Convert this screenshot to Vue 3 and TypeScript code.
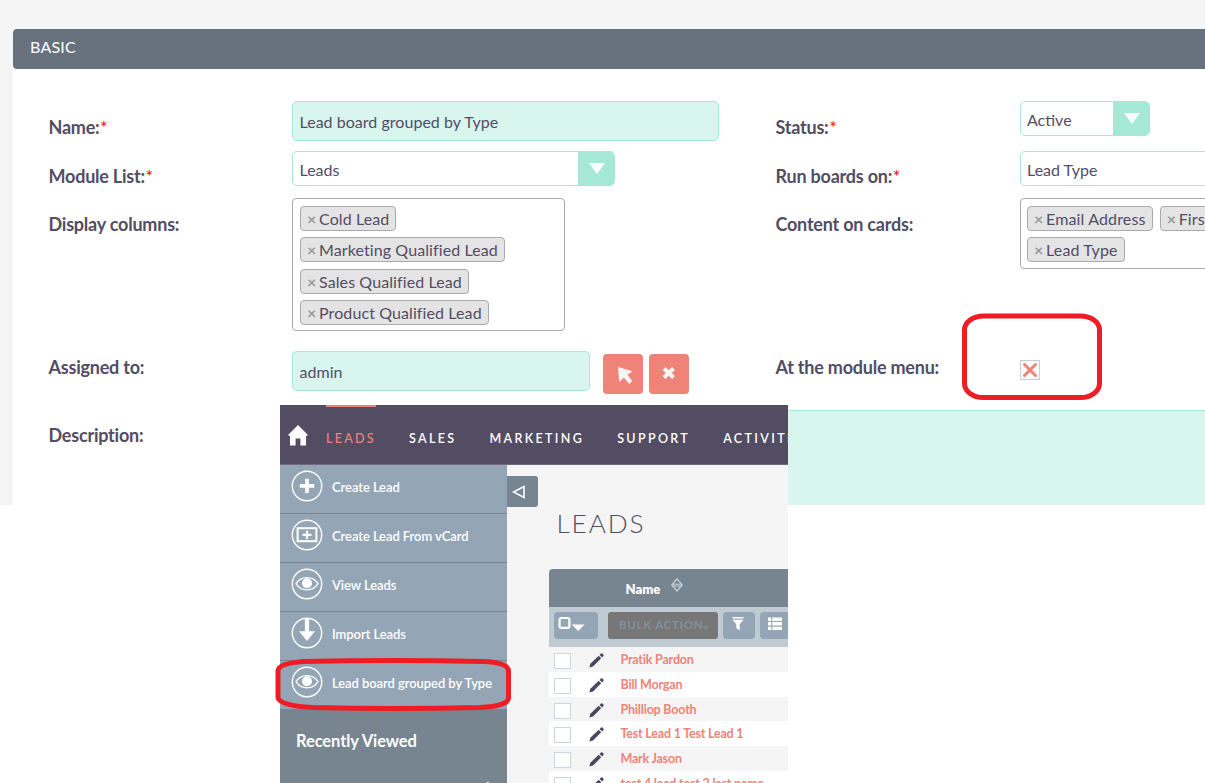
<script setup lang="ts">
interface MenuItem { label: string; icon: 'plus' | 'card' | 'eye' | 'import' }

const columns: string[] = ['Cold Lead', 'Marketing Qualified Lead', 'Sales Qualified Lead', 'Product Qualified Lead']
const cardFields: string[] = ['Email Address', 'First Name', 'Lead Type']
const tabs: string[] = ['LEADS', 'SALES', 'MARKETING', 'SUPPORT', 'ACTIVITIES']
const actions: MenuItem[] = [
  { label: 'Create Lead', icon: 'plus' },
  { label: 'Create Lead From vCard', icon: 'card' },
  { label: 'View Leads', icon: 'eye' },
  { label: 'Import Leads', icon: 'import' },
  { label: 'Lead board grouped by Type', icon: 'eye' },
]
const leads: string[] = ['Pratik Pardon', 'Bill Morgan', 'Philliop Booth', 'Test Lead 1 Test Lead 1', 'Mark Jason', 'test 4 lead test 2 last name']
</script>

<template>
  <div class="page">
    <main class="editor">
      <section class="panel">
        <header class="panel-head">BASIC</header>
        <div class="form">
          <label class="lab l1">Name:<b>*</b></label>
          <div class="input name">Lead board grouped by Type</div>
          <label class="lab l1">Status:<b>*</b></label>
          <div class="select status"><span>Active</span><i><svg width="16" height="11" viewBox="0 0 16 11"><path d="M0 0H16L8 11Z" fill="#fff" /></svg></i></div>

          <label class="lab l2">Module List:<b>*</b></label>
          <div class="select module"><span>Leads</span><i><svg width="16" height="11" viewBox="0 0 16 11"><path d="M0 0H16L8 11Z" fill="#fff" /></svg></i></div>
          <label class="lab l2">Run boards on:<b>*</b></label>
          <div class="select run"><span>Lead Type</span></div>

          <label class="lab l1">Display columns:</label>
          <div class="tags narrow"><span v-for="c in columns" :key="c" class="tag"><em>×</em>{{ c }}</span></div>
          <label class="lab l1">Content on cards:</label>
          <div class="tags wide"><span v-for="c in cardFields" :key="c" class="tag"><em>×</em>{{ c }}</span></div>

          <label class="lab l4">Assigned to:</label>
          <div class="assigned">
            <div class="input user">admin</div>
            <button class="btn pick"><svg width="40" height="40" viewBox="0 0 40 40"><path d="M15 13L29.5 17.3L24.5 20.8L29.3 27L26.2 30L21 23.8L16.2 28Z" fill="#f5f5f5" /></svg></button>
            <button class="btn"><svg width="40" height="40" viewBox="0 0 40 40"><path d="M15 14.5L24.5 23.5M24.5 14.5L15 23.5" stroke="#f5f5f5" stroke-width="4" /></svg></button>
          </div>
          <label class="lab l4">At the module menu:</label>
          <div class="check"><svg width="20" height="20" viewBox="0 0 20 20"><rect x=".5" y=".5" width="19" height="19" fill="#f8fafb" stroke="#c4ced6" /><path d="M4.5 4.5L15.5 15.5M15.5 4.5L4.5 15.5" stroke="#f08377" stroke-width="3" stroke-linecap="round" /></svg></div>

          <label class="lab l5">Description:</label>
          <div class="area"></div>
        </div>
      </section>
    </main>

    <section class="leads-window">
      <nav class="nav">
        <svg class="home" width="20" height="21" viewBox="0 0 20 21"><path d="M10 0L20 10L18 11.2V20.5H12.4V13.5H7.6V20.5H2V11.2L0 10Z" fill="#fff" /></svg>
        <a v-for="(t, i) in tabs" :key="t" :class="{ active: i === 0 }">{{ t }}</a>
      </nav>
      <div class="content">
        <aside class="side">
          <div v-for="a in actions" :key="a.label" class="action">
            <svg width="32" height="32" viewBox="0 0 32 32" fill="none" stroke="#fff">
              <circle cx="16" cy="16" r="14.7" stroke-width="1.4" />
              <path v-if="a.icon === 'plus'" d="M16 8.7V22.9M8.8 15.8H23.2" stroke-width="3.7" />
              <template v-else-if="a.icon === 'card'">
                <rect x="6.6" y="9.2" width="18.8" height="13" stroke-width="2" />
                <path d="M16 11.7V20.1M11.5 15.9H20.5" stroke-width="2.2" />
              </template>
              <template v-else-if="a.icon === 'eye'">
                <path d="M5 15.7C10 7.5 22 7.5 27 15.7C22 23.9 10 23.9 5 15.7Z" stroke-width="1.3" />
                <circle cx="16" cy="15.3" r="5" fill="#fff" stroke="none" />
              </template>
              <path v-else d="M13.9 1.5H18.1V14.2H24L16 24L8 14.2H13.9Z" fill="#fff" stroke="none" />
            </svg>
            <span>{{ a.label }}</span>
          </div>
          <div class="recent">
            <h3>Recently Viewed</h3>
            <svg width="10" height="12" viewBox="0 0 10 12"><path d="M1 4L5 .5L9 5.5L6 11Z" fill="#fff" /></svg>
          </div>
        </aside>
        <div class="toggle"><svg width="14" height="14" viewBox="0 0 14 14"><path d="M1.5 7L12 1.5V12.5Z" fill="none" stroke="#fff" stroke-width="1.6" /></svg></div>
        <div class="list">
          <h1>LEADS</h1>
          <div class="table">
            <div class="thead"><span>Name</span>
              <svg width="12" height="14" viewBox="0 0 12 14" fill="none" stroke="#cbd3d9"><path d="M6 .8L11.2 6.9L6 13L.8 6.9Z" stroke-width="1.2" /><path d="M1.5 6.2H10.5M1.5 8H10.5" stroke-width="1" /></svg>
            </div>
            <div class="toolbar">
              <div class="tool sel"><svg width="28" height="16" viewBox="0 0 28 16"><rect x="1.6" y="2" width="9.8" height="9.8" rx="1.8" fill="none" stroke="#fff" stroke-width="2.2" /><path d="M13.8 8.6H26.5L20.2 14.900Z" fill="#fff" /></svg></div>
              <div class="bulk"><span>BULK ACTION</span><svg width="9" height="5" viewBox="0 0 10 6"><path d="M0 0H10L5 5Z" fill="#82868c" /></svg></div>
              <div class="tool filter"><svg width="12" height="14" viewBox="0 0 12 14"><path d="M.5 0H11.5V1.6H.5ZM.5 2.7H11.5L7.7 7.2V13.5L4.3 11V7.2Z" fill="#fff" /></svg></div>
              <div class="tool cols"><svg width="14" height="14" viewBox="0 0 14 14"><path d="M0 .5H3.2V3.9H0ZM4.3 .5H14V3.9H4.3ZM0 5.1H3.2V8.5H0ZM4.3 5.1H14V8.5H4.3ZM0 9.7H3.2V13.1H0ZM4.3 9.7H14V13.1H4.3Z" fill="#fff" /></svg></div>
            </div>
            <div v-for="l in leads" :key="l" class="row">
              <i class="box"></i>
              <svg width="15" height="15" viewBox="0 0 15 15" fill="#4c465f"><path d="M.4 14.6L1.3 10.7L9.7 2.7L12.2 5.3L4 13.6ZM10.6 1.9L12 .6Q12.7 0 13.4 .6L14.4 1.6Q15 2.3 14.4 3L13.1 4.4Z" /></svg>
              <a>{{ l }}</a>
            </div>
          </div>
        </div>
      </div>
    </section>

    <svg class="mark menu-mark" width="142" height="88" viewBox="0 0 142 88"><rect x="3.5" y="3" width="135" height="81.5" rx="19" ry="14" /></svg>
    <svg class="mark item-mark" width="240" height="56" viewBox="0 0 240 56"><path d="M29 4.5Q119 2.5 209 4.5Q234.500 5.500 234.500 14V41Q234.500 49 206 50.500Q119 52.500 39 50.500Q4 48.500 4 40V14Q4 6.500 29 4.500Z" /></svg>
  </div>
</template>

<style>
body { margin: 0; overflow: hidden; background: #fff; }
</style>
<style scoped>
* { box-sizing: border-box; }
.page { position: relative; width: 1205px; height: 783px; overflow: hidden; background: #fff; color: #534d64; font: 16px/20px Lato, sans-serif; }
.editor { height: 505px; padding: 29px 0 0 13px; background: #f5f5f5; overflow: hidden; }
.panel { height: 476px; background: #fff; }
.panel-head { height: 40px; padding: 8px 17px; color: #fff; background: #67727e; border-radius: 4px 0 0 4px; font-size: 16px; letter-spacing: .2px; }
.form { display: grid; grid-template-columns: 243px 484px 244px 185px; grid-template-rows: 50px 47px 153px 59px 95px; padding: 32px 0 0 36px; }
.lab { margin-left: -.5px; font-size: 18px; font-weight: 700; letter-spacing: -.22px; white-space: nowrap; }
.lab b { margin-left: .6px; color: red; font-weight: 400; }
.l1 { padding-top: 16px; }
.l2 { padding-top: 15px; }
.l4 { padding-top: 6px; }
.l5 { padding-top: 15px; }
.input { height: 40px; padding: 10px 6.5px; background: #d8f5ee; border: 1px solid #a5e8d6; border-radius: 5px; letter-spacing: .03px; }
.name { width: 427px; }
.select { display: flex; height: 35px; background: #fff; border: 1px solid #a5e8d6; border-radius: 5px; overflow: hidden; }
.select span { flex: 1; padding: 8px 6px; white-space: nowrap; }
.select i { width: 36px; padding: 11px 0 0 11px; background: #a5e8d6; line-height: 0; }
.module { width: 323px; }
.module span { padding-left: 6.5px; }
.status { width: 130px; }
.run { width: 300px; }
.tags { display: flex; flex-wrap: wrap; align-content: flex-start; gap: 6.35px 6px; border: 1px solid #aaa; border-radius: 4px; padding: 7px 7px 0; }
.narrow { width: 273px; height: 133px; }
.wide { width: 300px; height: 71px; padding-left: 6px; column-gap: 7px; }
.tag { display: flex; height: 25px; padding: 2px 6px 0; background: #e4e4e4; border: 1px solid #aaa; border-radius: 4px; white-space: nowrap; letter-spacing: .1px; }
.tag em { width: 12px; color: #999; font-style: normal; font-weight: 700; }
.wide .tag { letter-spacing: .15px; }
.assigned { display: flex; }
.user { width: 298px; }
.btn { width: 40px; height: 40px; padding: 0; margin: 3px 0 0 6px; border: 0; border-radius: 4px; background: #f08377; line-height: 0; }
.pick { margin-left: 13px; }
.check { padding-top: 9px; line-height: 0; }
.area { width: 1000px; height: 120px; background: #d8f5ee; border: 1px solid #a5e8d6; }

.leads-window { position: absolute; left: 280px; top: 405px; width: 508px; height: 378px; overflow: hidden; background: #f5f5f5; }
.nav { display: flex; height: 60px; padding-left: 8px; background: #534d64; border-bottom: 1px solid #706b7e; color: #fff; }
.home { flex: none; margin: 20px 18px 0 0; }
.nav a { flex: none; height: 60px; margin-right: 33px; padding-top: 21px; border-top: 2px solid transparent; font-size: 12.5px; line-height: 21px; font-weight: 600; letter-spacing: 2.35px; }
.nav .active { border-color: #f08377; color: #f08377; font-weight: 500; letter-spacing: 2.3px; }
.content { display: flex; height: 318px; }
.side { width: 227px; flex: none; background: #94a6b5; }
.action { display: flex; height: 49px; padding: 5px 0 0 11px; border-bottom: 1px solid #778591; color: #fff; font-size: 13px; font-weight: 600; letter-spacing: -.07px; white-space: nowrap; }
.action span { padding: 7px 0 0 9px; }
.action svg { flex: none; }
.recent { height: 80px; padding: 21px 16px 0; background: #778591; color: #fff; }
.recent h3 { margin: 0; font-size: 16.5px; line-height: 20px; letter-spacing: -.1px; }
.recent svg { display: block; margin: 30px 0 0 187px; }
.toggle { flex: none; width: 31px; height: 31px; margin-top: 11px; padding: 9px 0 0 5px; border-radius: 0 3px 3px 0; background: #778591; line-height: 0; }
.list { flex: none; width: 239px; margin-left: 11px; }
h1 { margin: 42px 0 0 7.5px; font-size: 26.3px; line-height: 32px; font-weight: 300; letter-spacing: 1.8px; }
.table { margin-top: 30px; border-radius: 4px 0 0; overflow: hidden; }
.thead { display: flex; height: 38px; padding: 10px 0 0 76.5px; background: #778591; color: #fff; font-size: 13px; font-weight: 800; }
.thead svg { margin: -1px 0 0 11px; }
.toolbar { display: flex; height: 40px; padding: 5px 0 0 5px; background: #bfcad3; }
.tool { flex: none; height: 27px; background: #94a6b5; border-radius: 4px; line-height: 0; }
.sel { width: 44px; padding: 4px; margin-right: 10px; }
.bulk { display: flex; flex: none; width: 110px; height: 27px; padding: 3px 0 0 11px; background: #777; border-radius: 3px; color: #82909d; font-size: 11.5px; font-weight: 700; white-space: nowrap; }
.bulk span { width: 82px; letter-spacing: .75px; }
.bulk svg { margin-top: 11px; flex: none; }
.filter { width: 32px; margin: 0 5px; padding: 5px 9px; }
.cols { width: 40px; padding: 5px 8px; }
.row { display: flex; height: 24.8px; background: #f5f5f5; color: #f08377; font-size: 12.5px; font-weight: 700; line-height: 20px; padding: 3px 0 0 4.5px; white-space: nowrap; }
.row:nth-child(even) { background: #fff; }
.row a { letter-spacing: -.2px; }
.box { width: 17px; height: 16px; margin: 3px 18px 0 0; border: 1px solid #cbd6df; background: #fff; }
.row svg { margin: 3px 17px 0 0; flex: none; }
.mark { position: absolute; fill: none; stroke: #ee1c25; stroke-width: 5; }
.menu-mark { left: 961px; top: 313px; }
.item-mark { left: 274px; top: 657px; }
</style>
